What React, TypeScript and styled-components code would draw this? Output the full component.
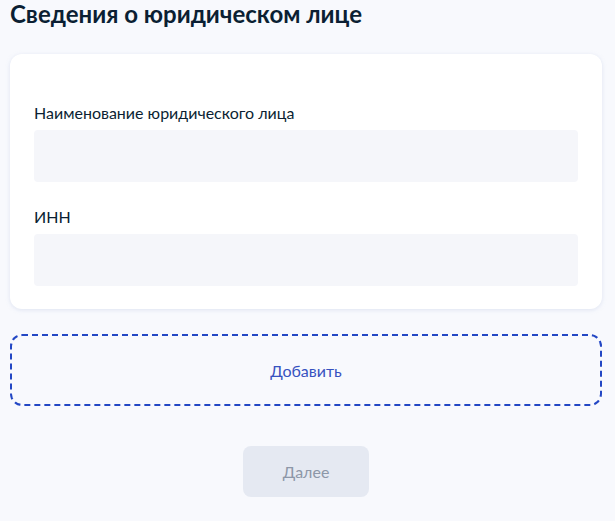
import React from 'react';
import styled, { createGlobalStyle } from 'styled-components';

const GlobalStyle = createGlobalStyle`
  html, body {
    margin: 0;
    padding: 0;
    background: #f8f9fd;
    font-family: Lato, "Open Sans", sans-serif;
    color: #0b1f33;
  }
`;

const Page = styled.div`
  width: 592px;
  padding: 0 13px 0 10px;
  display: flex;
  flex-direction: column;
`;

const Title = styled.h1`
  margin: 0;
  font-size: 24px;
  line-height: 28px;
  font-weight: 700;
  color: #0b1f33;
`;

const Card = styled.div`
  margin-top: 26px;
  background: #ffffff;
  border-radius: 12px;
  box-shadow: 0 1px 4px rgba(176, 190, 220, 0.35);
  padding: 49px 24px 23px;
  display: flex;
  flex-direction: column;
  gap: 25px;
`;

const Field = styled.div`
  display: flex;
  flex-direction: column;
`;

const Label = styled.label`
  font-size: 16px;
  line-height: 20px;
  color: #0b1f33;
  margin-bottom: 7px;
`;

const Input = styled.input`
  height: 52px;
  box-sizing: border-box;
  border: none;
  border-radius: 4px;
  background: #f5f6fa;
  padding: 0 16px;
  font-family: inherit;
  font-size: 16px;
  outline: none;
`;

const AddBox = styled.button`
  margin-top: 25px;
  height: 72px;
  border: 2px dashed #2347c4;
  border-radius: 12px;
  background: transparent;
  font-family: inherit;
  font-size: 16px;
  color: #3752c0;
  cursor: pointer;
`;

const Footer = styled.div`
  display: flex;
  justify-content: center;
  margin-top: 40px;
`;

const NextButton = styled.button`
  width: 126px;
  height: 51px;
  border: none;
  border-radius: 8px;
  background: #e5e9f2;
  color: #8d97a8;
  font-family: inherit;
  font-size: 16px;
`;

const App: React.FC = () => {
  return (
    <>
      <GlobalStyle />
      <Page>
        <Title>Сведения о юридическом лице</Title>
        <Card>
          <Field>
            <Label>Наименование юридического лица</Label>
            <Input />
          </Field>
          <Field>
            <Label>ИНН</Label>
            <Input />
          </Field>
        </Card>
        <AddBox>Добавить</AddBox>
        <Footer>
          <NextButton disabled>Далее</NextButton>
        </Footer>
      </Page>
    </>
  );
};

export default App;
